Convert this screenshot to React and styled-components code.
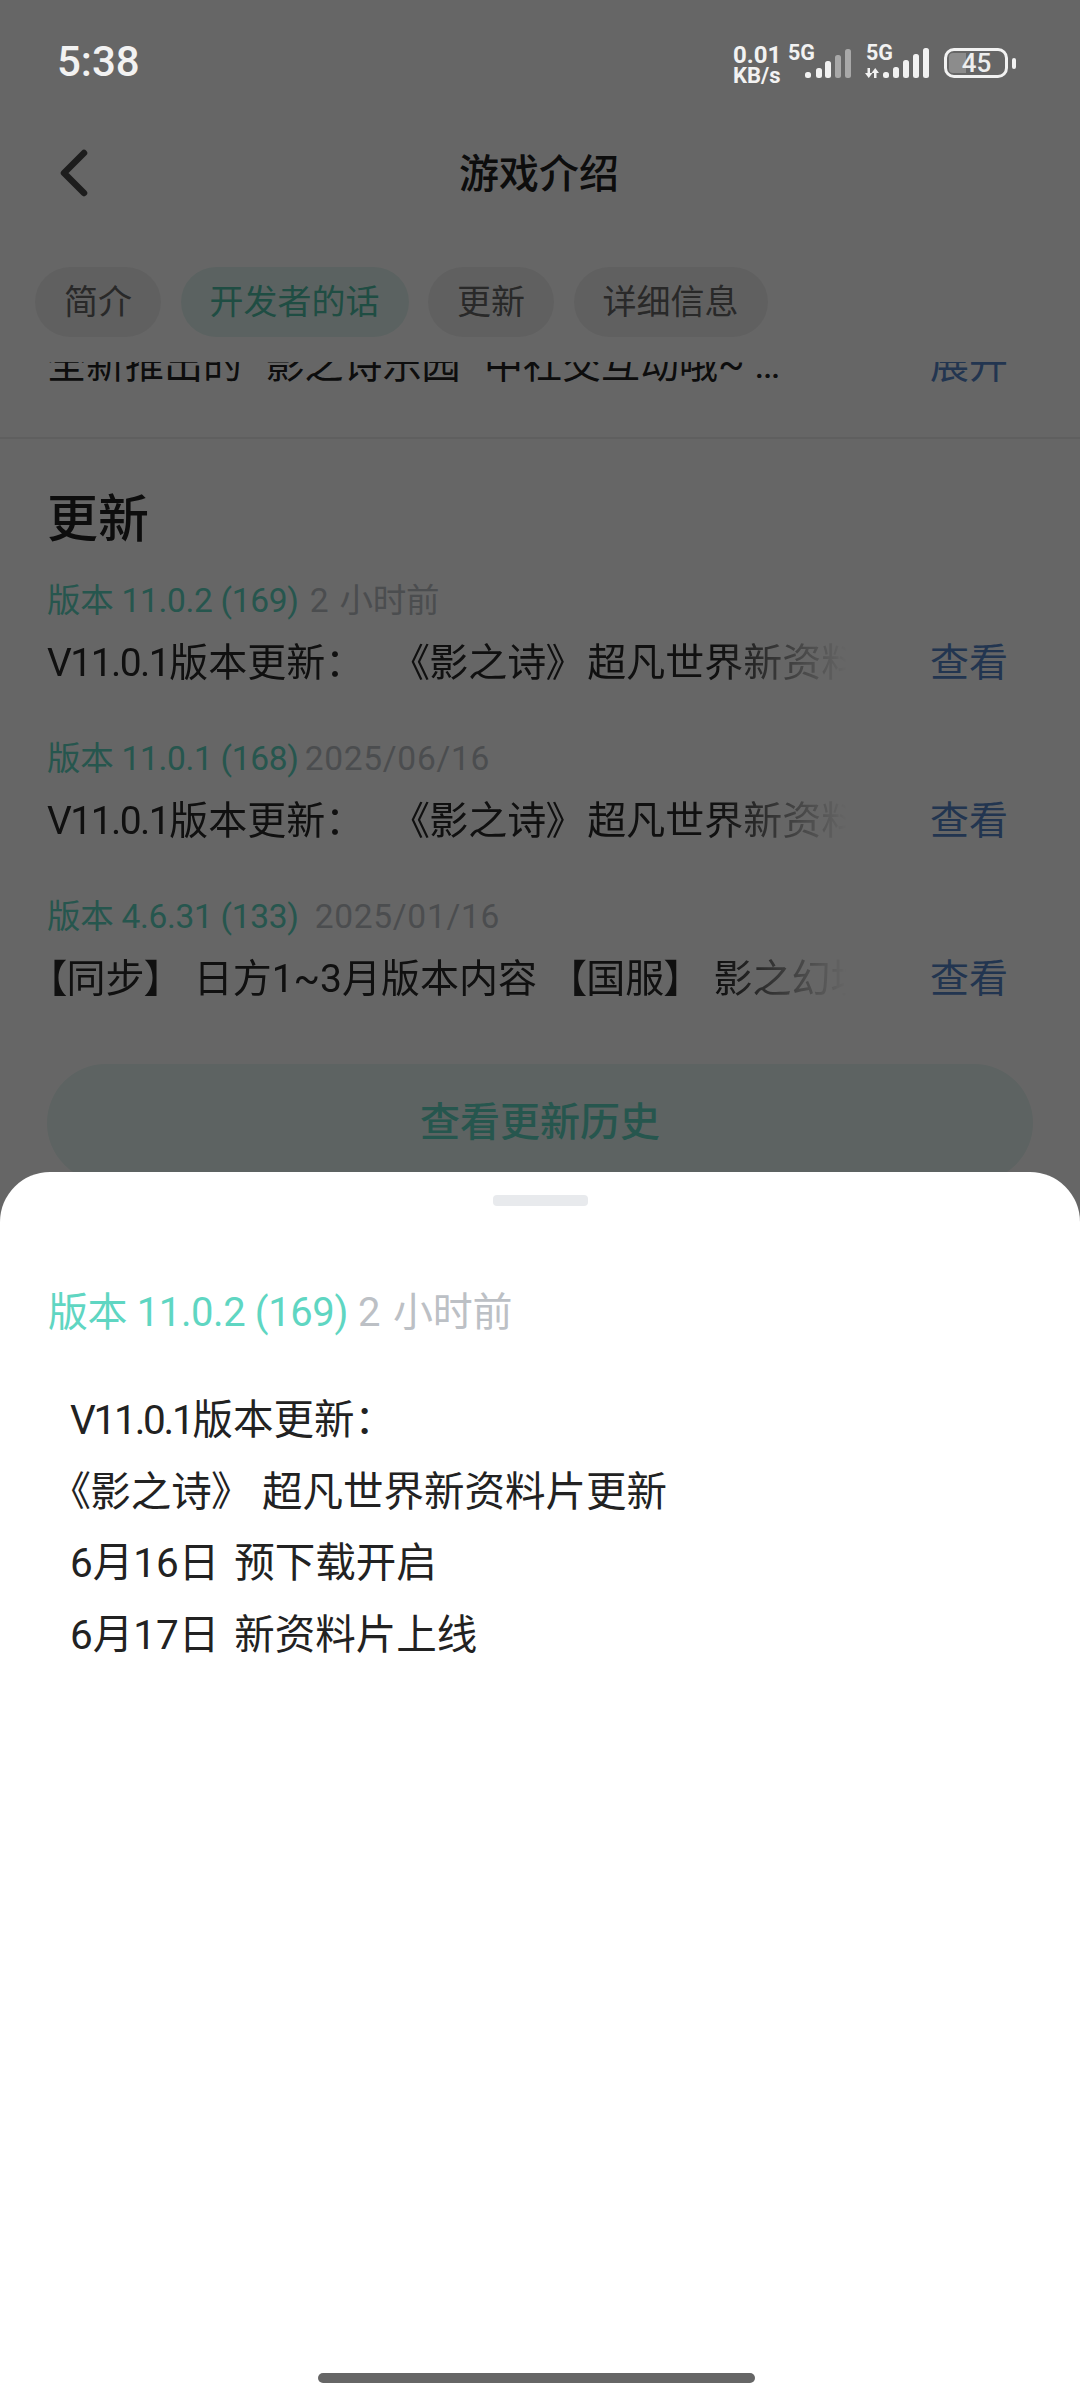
import React from 'react';
import styled, { createGlobalStyle } from 'styled-components';

const GlobalStyle = createGlobalStyle`
  html, body {
    margin: 0;
    padding: 0;
    background: #fff;
  }
  body {
    font-family: Roboto, "Noto Sans CJK SC", sans-serif;
    font-feature-settings: "palt";
  }
  * {
    box-sizing: border-box;
  }
`;

const Screen = styled.div`
  position: relative;
  width: 1080px;
  height: 2401px;
  overflow: hidden;
  background: #fff;
`;

const StatusBar = styled.div`
  position: relative;
  z-index: 2;
  height: 124px;
  padding: 45px 64px 0 57px;
  display: flex;
  justify-content: space-between;
  align-items: flex-start;
  color: #f2f2f2;
`;

const Time = styled.div`
  font-size: 42px;
  font-weight: 500;
  line-height: 34px;
`;

const StatusIcons = styled.div`
  display: flex;
  align-items: flex-start;
`;

const Speed = styled.div`
  width: 55px;
  font-weight: 700;
  font-size: 24px;
  line-height: 20px;
`;

const SpeedUnit = styled.div`
  font-size: 22px;
  line-height: 20px;
  margin-top: 1px;
`;

const SignalBox = styled.div`
  position: relative;
  width: ${p => p.$width}px;
  height: 36px;
  margin-left: ${p => p.$gap}px;
`;

const SignalLabel = styled.span`
  position: absolute;
  left: ${p => p.$left}px;
  top: -3px;
  font-size: 21.5px;
  font-weight: 700;
  line-height: 22px;
`;

const Battery = styled.div`
  display: flex;
  align-items: center;
  margin: 3px 0 0 14px;
`;

const BatteryBody = styled.div`
  position: relative;
  width: 64px;
  height: 30px;
  border: 3px solid #f2f2f2;
  border-radius: 10px;
  padding: 2px;
  display: flex;
  justify-content: center;
  align-items: center;
`;

const BatteryLevel = styled.div`
  position: absolute;
  left: 2px;
  top: 2px;
  bottom: 2px;
  border-radius: 4px 0 0 4px;
  background: #8c8c8c;
`;

const BatteryText = styled.span`
  position: relative;
  margin-left: 1px;
  font-size: 26px;
  font-weight: 500;
  line-height: 24px;
  color: #eee;
`;

const BatteryTip = styled.div`
  width: 4px;
  height: 11px;
  margin-left: 4px;
  border-radius: 2px;
  background: #f2f2f2;
`;

const NavBar = styled.div`
  position: relative;
  height: 100px;
  display: flex;
  align-items: center;
  justify-content: center;
  padding-top: 2px;
`;

const BackButton = styled.svg`
  position: absolute;
  left: 58px;
  top: 25px;
  width: 32px;
  height: 48px;
  fill: none;
  stroke: #4a4a4a;
  stroke-width: 6.5;
  stroke-linecap: round;
  stroke-linejoin: round;
`;

const Title = styled.h1`
  margin: 0 0 0 -2px;
  font-size: 40px;
  font-weight: 500;
  line-height: 50px;
  color: #222;
`;

const Tabs = styled.div`
  display: flex;
  gap: 19.5px;
  padding: 43px 35px 25px;
`;

const Tab = styled.div`
  height: 70px;
  padding: 0 29px;
  border-radius: 35px;
  font-size: 34px;
  line-height: 70px;
  color: ${p => p.$active ? '#4fc0a8' : '#666'};
  background: ${p => p.$active ? '#e4f6f2' : '#f1f1f1'};
`;

const Scroller = styled.div`
  height: 810px;
  overflow: hidden;
`;

const IntroRow = styled.div`
  display: flex;
  justify-content: space-between;
  margin-top: -27px;
  padding: 0 72px 0 47px;
  font-size: 39px;
  line-height: 60px;
  color: #222;
  white-space: pre;
`;

const Divider = styled.div`
  height: 2px;
  margin-top: 42px;
  background: #eee;
`;

const Section = styled.section`
  padding: 51px 47px 0;
`;

const Heading = styled.h2`
  margin: 0;
  font-size: 51px;
  font-weight: 500;
  line-height: 60px;
  color: #222;
`;

const Entry = styled.div`
  margin-top: ${p => p.$first ? 29 : 49}px;
`;

const VersionLine = styled.div`
  font-size: ${p => p.$large ? 40 : 33.5}px;
  line-height: ${p => p.$large ? 50 : 44}px;
  letter-spacing: ${p => p.$large ? -0.4 : -0.3}px;
`;

const Version = styled.span`
  color: #5fd6c2;
`;

const Age = styled.span`
  margin-left: ${p => p.$gap}px;
  color: #bcc0c5;
  word-spacing: 3px;
  letter-spacing: ${p => p.$date ? 0.7 : -0.2}px;
`;

const EntryRow = styled.div`
  display: flex;
  justify-content: space-between;
  margin-top: 15px;
  padding-right: 25px;
  font-size: 39px;
  line-height: 50px;
  color: #2a2a2a;
`;

const EntryText = styled.div`
  width: 800px;
  overflow: hidden;
  white-space: pre;
  word-spacing: ${p => p.$spaces}px;
  mask-image: linear-gradient(to right, #000 84%, transparent 100%);
`;

// the latin run in the reference is tighter than Roboto
const Narrow = styled.span`
  letter-spacing: ${p => p.$tight}em;
`;

const Action = styled.span`
  color: #5686c8;
`;

const HistoryButton = styled.div`
  height: 118px;
  margin-top: 60px;
  border-radius: 59px;
  background: #e8f7f4;
  text-align: center;
  font-size: 40px;
  font-weight: 500;
  line-height: 118px;
  color: #5fd6c2;
`;

const Scrim = styled.div`
  position: absolute;
  inset: 0;
  z-index: 1;
  background: rgba(0, 0, 0, 0.6);
`;

const Sheet = styled.div`
  position: absolute;
  left: 0;
  right: 0;
  bottom: 0;
  top: 1172px;
  z-index: 3;
  padding: 23px 48px 18px;
  display: flex;
  flex-direction: column;
  border-radius: 50px 50px 0 0;
  background: #fff;
`;

const Handle = styled.div`
  align-self: center;
  width: 95px;
  height: 11px;
  border-radius: 4px;
  background: #e8eaed;
`;

const SheetVersion = styled.div`
  margin-top: 82px;
`;

const Notes = styled.div`
  margin: 47px 0 0 22px;
  font-size: 40.5px;
  line-height: 71.5px;
  color: #222;
  white-space: pre;
  word-spacing: 5px;
`;

const HomeIndicator = styled.div`
  align-self: center;
  width: 437px;
  height: 10px;
  margin: auto 8px 0 0;
  border-radius: 5px;
  background: #666;
`;

const updateBody = '版本更新：   《影之诗》 超凡世界新资料片更新';

const entries = [
  { version: '版本 11.0.2 (169)', age: '2 小时前', ageGap: 11, lead: 'V11.0.1', text: updateBody, spaces: 12 },
  { version: '版本 11.0.1 (168)', age: '2025/06/16', ageGap: 6, date: true, lead: 'V11.0.1', text: updateBody, spaces: 12 },
  { version: '版本 4.6.31 (133)', age: '2025/01/16', ageGap: 16, date: true, text: '【同步】 日方1~3月版本内容 【国服】 影之幻境', spaces: 20 },
];

const tabs = ['简介', '开发者的话', '更新', '详细信息'];

// bar positions are relative to the icon box, bottom edge sits at y=33
const SignalBars = ({ bars, arrows }) => (
  <svg width="66" height="36" viewBox="0 0 66 36" style={{ display: 'block' }}>
    {arrows && <path d="M3.5 23H6v5h2.5L4.75 33 1 28h2.5zM10 33v-5H7.5L11.25 23 15 28h-2.5v5z" fill="#f2f2f2" />}
    {bars.map(b => (
      <rect key={b.x} x={b.x} y={b.y} width="6" height={33 - b.y} rx="2.5" fill={b.dim ? '#a8a8a8' : '#f2f2f2'} />
    ))}
  </svg>
);

const barsFirst = [
  { x: 17, y: 27 },
  { x: 28, y: 23 },
  { x: 37, y: 16 },
  { x: 47, y: 10, dim: true },
  { x: 57, y: 4, dim: true },
];

const barsSecond = [
  { x: 19, y: 27 },
  { x: 29, y: 22 },
  { x: 39, y: 15 },
  { x: 49, y: 9 },
  { x: 59, y: 3 },
];

const App = () => (
  <Screen>
    <GlobalStyle />
    <StatusBar>
      <Time>5:38</Time>
      <StatusIcons>
        <Speed>
          0.01
          <SpeedUnit>KB/s</SpeedUnit>
        </Speed>
        <SignalBox $width={63} $gap={0}>
          <SignalLabel $left={0}>5G</SignalLabel>
          <SignalBars bars={barsFirst} />
        </SignalBox>
        <SignalBox $width={66} $gap={13}>
          <SignalLabel $left={2}>5G</SignalLabel>
          <SignalBars bars={barsSecond} arrows />
        </SignalBox>
        <Battery>
          <BatteryBody>
            <BatteryLevel style={{ width: '29%' }} />
            <BatteryText>45</BatteryText>
          </BatteryBody>
          <BatteryTip />
        </Battery>
      </StatusIcons>
    </StatusBar>

    <NavBar>
      <BackButton viewBox="0 0 32 48">
        <path d="M26 4L6 24l20 20" />
      </BackButton>
      <Title>游戏介绍</Title>
    </NavBar>

    <Tabs>
      {tabs.map((t, i) => <Tab key={t} $active={i === 1}>{t}</Tab>)}
    </Tabs>

    <Scroller>
      <IntroRow>
        <span>全新推出的 “影之诗乐园” 中社交互动哦~ …</span>
        <Action>展开</Action>
      </IntroRow>
      <Divider />
      <Section>
        <Heading>更新</Heading>
        {entries.map((e, i) => (
          <Entry key={e.version} $first={i === 0}>
            <VersionLine>
              <Version>{e.version}</Version>
              <Age $date={e.date} $gap={e.ageGap}>{e.age}</Age>
            </VersionLine>
            <EntryRow>
              <EntryText $spaces={e.spaces}>
                {e.lead && <Narrow $tight={-0.04}>{e.lead}</Narrow>}
                {e.text}
              </EntryText>
              <Action>查看</Action>
            </EntryRow>
          </Entry>
        ))}
        <HistoryButton>查看更新历史</HistoryButton>
      </Section>
    </Scroller>

    <Scrim />

    <Sheet>
      <Handle />
      <SheetVersion>
        <VersionLine $large>
          <Version>{entries[0].version}</Version>
          <Age $gap={10}>{entries[0].age}</Age>
        </VersionLine>
      </SheetVersion>
      <Notes>
        <div><Narrow $tight={-0.055}>V11.0.1</Narrow>版本更新：</div>
        <div>《影之诗》  超凡世界新资料片更新</div>
        <div>6月16日 预下载开启</div>
        <div>6月17日 新资料片上线</div>
      </Notes>
      <HomeIndicator />
    </Sheet>
  </Screen>
);

export default App;
